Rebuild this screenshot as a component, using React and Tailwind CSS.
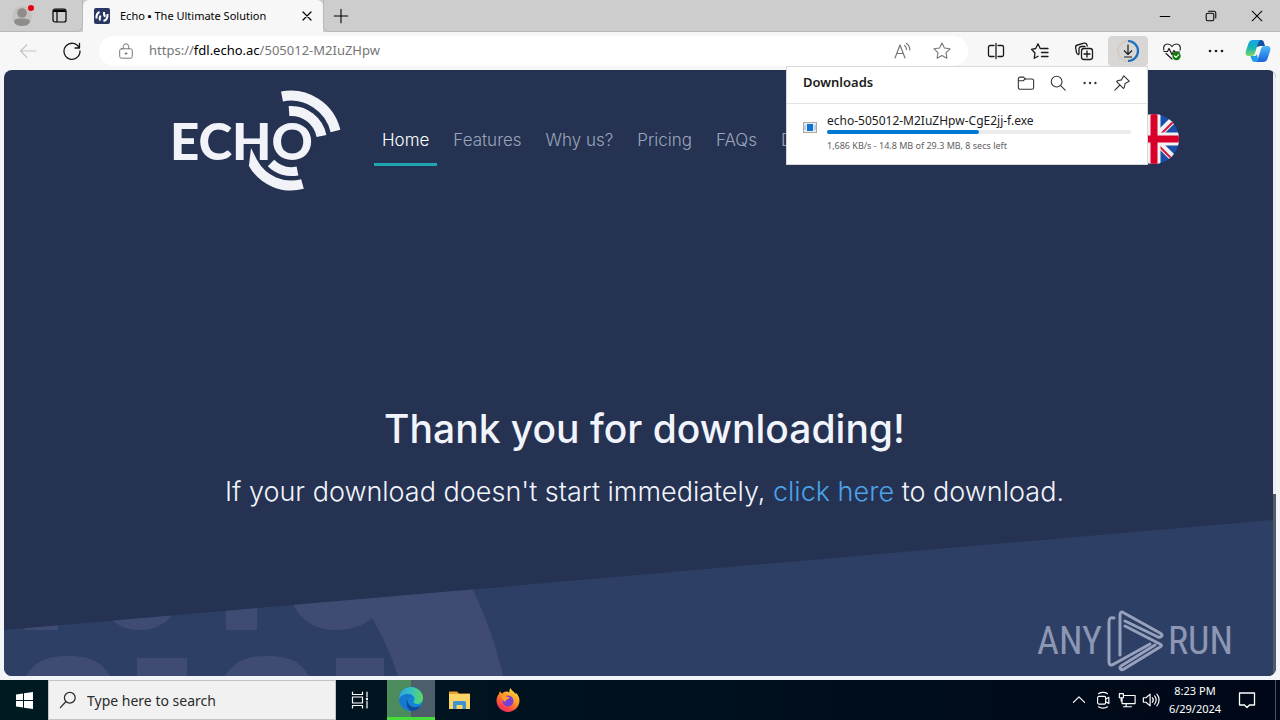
import clsx from 'clsx'

const NAV = ['Home', 'Features', 'Why us?', 'Pricing', 'FAQs', 'Docs']

// Thin line icon on a 20px grid
function Icon({ children, size = 20, stroke = 1.1, className }) {
  return (
    <svg
      width={size}
      height={size}
      viewBox="0 0 20 20"
      fill="none"
      stroke="currentColor"
      strokeWidth={stroke}
      strokeLinecap="round"
      strokeLinejoin="round"
      className={clsx('shrink-0', className)}
      aria-hidden="true"
    >
      {children}
    </svg>
  )
}

function ToolButton({ label, className, children }) {
  return (
    <button
      type="button"
      aria-label={label}
      className={clsx('flex h-[30px] w-10 shrink-0 items-center justify-center rounded-sm', className)}
    >
      {children}
    </button>
  )
}

function Dots({ size = 20 }) {
  return (
    <Icon size={size}>
      <g fill="currentColor" stroke="none">
        <circle cx="4" cy="10" r="1.3" />
        <circle cx="10" cy="10" r="1.3" />
        <circle cx="16" cy="10" r="1.3" />
      </g>
    </Icon>
  )
}

function EchoFavicon() {
  return (
    <svg width="16" height="16" viewBox="0 0 16 16" className="shrink-0" aria-hidden="true">
      <rect width="16" height="16" rx="2" fill="#2b3763" />
      <g fill="none" stroke="#fff" strokeWidth="2">
        <path d="M2.500 10.500c-.3-3 .8-5.500 3-6.500M6 12.500c-.8-2-.3-3.500.5-5" />
        <path d="M9.500 13c2.500-.8 4.300-3.500 4-7M10 4c-.3 2.500.3 4 1.500 4.500" />
      </g>
    </svg>
  )
}

function TitleBar() {
  return (
    <div className="flex h-8 bg-[#cdcdcd]">
      <div className="flex w-[83px] items-center gap-[18px] rounded-br-md border-r border-b border-[#b8b8b8] pl-3">
        <button type="button" aria-label="Profile">
          <svg width="22" height="24" viewBox="0 0 22 24" aria-hidden="true">
            <circle cx="10" cy="12" r="10" fill="#c4c2c0" />
            <circle cx="10" cy="9" r="4.800" fill="#8f8c89" />
            <path d="M2 18c0-3 3-3.500 8-3.500s8 .5 8 3.500c-1.500 3-4.500 4-8 4s-6.500-1-8-4z" fill="#8f8c89" />
            <circle cx="19" cy="4" r="3" fill="#e3000b" />
          </svg>
        </button>
        <button type="button" aria-label="Tab actions">
          <svg width="15" height="15" viewBox="0 0 15 15" fill="none" stroke="#000" strokeWidth="1.200" aria-hidden="true">
            <rect x="1" y="1" width="13" height="13" rx="2" />
            <path d="M1 3.500h13M5 4v10" />
            <path d="M2 2.500h11" strokeWidth="2" />
          </svg>
        </button>
      </div>
      <div className="flex w-60 items-center rounded-t-md bg-[#f7f7f7] pr-2 pl-[11px]">
        <EchoFavicon />
        <span className="ml-2.5 flex-1 whitespace-nowrap text-[11px] text-black">Echo ▪ The Ultimate Solution</span>
        <button type="button" aria-label="Close tab" className="text-black">
          <Icon size={16} stroke={1.5}>
            <path d="M5 5l10 10M15 5L5 15" />
          </Icon>
        </button>
      </div>
      <div className="flex flex-1 items-center rounded-bl-md border-b border-l border-[#b8b8b8] pl-2 text-black">
        <button type="button" aria-label="New tab">
          <Icon size={18} stroke={1.2}>
            <path d="M10 2.500v15M2.500 10h15" />
          </Icon>
        </button>
        <div className="ml-auto flex">
          <button type="button" aria-label="Minimize" className="flex w-[46px] justify-center">
            <Icon size={16} stroke={1.3}>
              <path d="M4 10.500h12" />
            </Icon>
          </button>
          <button type="button" aria-label="Restore" className="flex w-[46px] justify-center">
            <Icon size={16} stroke={1.3}>
              <rect x="4" y="6.500" width="9.500" height="9.500" rx="2" />
              <path d="M7 4h6.500a2.500 2.500 0 0 1 2.500 2.500v6" />
            </Icon>
          </button>
          <button type="button" aria-label="Close" className="flex w-[46px] justify-center">
            <Icon size={16} stroke={1.3}>
              <path d="M4 4l12 12M16 4L4 16" />
            </Icon>
          </button>
        </div>
      </div>
    </div>
  )
}

function CopilotLogo() {
  return (
    <svg width="26" height="24" viewBox="0 0 26 24" aria-hidden="true">
      <defs>
        <linearGradient id="cp1" x1="0" y1="0" x2="0" y2="1">
          <stop offset="0" stopColor="#17a5e8" />
          <stop offset="0.500" stopColor="#17b4b4" />
          <stop offset="1" stopColor="#7fd95f" />
        </linearGradient>
        <linearGradient id="cp2" x1="0" y1="0" x2="0" y2="1">
          <stop offset="0" stopColor="#4fb8f5" />
          <stop offset="0.600" stopColor="#2a84ea" />
          <stop offset="1" stopColor="#1f62dc" />
        </linearGradient>
      </defs>
      <path d="M12 1h4c2 0 2.500 1 3 2.500L20 7h-5l-3 1z" fill="#1450a0" />
      <path d="M8 1h8c-1.500 0-2.300 1.200-3 3.500L10 14c-.7 2-1.500 3-4 3H4c-3 0-4-2-3.200-4.500l2.600-8C4.300 2 5.500 1 8 1z" fill="url(#cp1)" />
      <path d="M18 23h-8c1.500 0 2.300-1.200 3-3.500L16 10c.7-2 1.500-3 4-3h2c3 0 4 2 3.200 4.500l-2.600 8C21.700 22 20.500 23 18 23z" fill="url(#cp2)" />
      <path d="M5.500 17H9c1.500 0 2.500-.5 3-2l1 5c-.6 2-1.500 3-3 3-2 0-3-1-3.500-3z" fill="#1fa0e8" />
    </svg>
  )
}

function DownloadsPopup() {
  return (
    <section
      aria-label="Downloads"
      className="absolute top-full right-0 z-20 w-[362px] border border-[#d8d8d8] bg-white pb-2.5 text-[#1b1b1b]"
    >
      <div className="flex h-[37px] items-center border-b border-[#e2e2e2] pr-4 pb-1 pl-4">
        <h2 className="flex-1 text-[13px] font-semibold">Downloads</h2>
        <div className="flex gap-3.5 text-[#333]">
          <button type="button" aria-label="Open downloads folder">
            <Icon size={18} stroke={1.2}>
              <path d="M1.500 5.500a2 2 0 0 1 2-2h3.800l2 2h7.200a2 2 0 0 1 2 2v7.500a2 2 0 0 1-2 2h-13a2 2 0 0 1-2-2z" />
              <path d="M1.500 7.500h5.300l2.500-2" />
            </Icon>
          </button>
          <button type="button" aria-label="Search downloads">
            <Icon size={18} stroke={1.2}>
              <circle cx="8.500" cy="8.500" r="6" />
              <path d="M13 13l5 5" />
            </Icon>
          </button>
          <button type="button" aria-label="More options">
            <Dots size={18} />
          </button>
          <button type="button" aria-label="Pin downloads">
            <Icon size={18} stroke={1.2}>
              <path d="M12 2l6 6-1.500 1-3 1.500-1 4.500-1 1-7.500-7.500 1-1L9.500 6.500 11 3.500zM7.500 12.500L2 18" />
            </Icon>
          </button>
        </div>
      </div>
      <div className="flex items-start gap-2.5 px-4 pt-2">
        <svg width="14" height="11" viewBox="0 0 14 11" className="mt-2.5 shrink-0" aria-hidden="true">
          <rect x="0.500" y="0.500" width="13" height="10" fill="#e4eef5" stroke="#b5a79c" />
          <rect x="4" y="2" width="6" height="7" fill="#1173cf" />
          <path d="M2 3v5M12 3v5" stroke="#8cb8dc" />
        </svg>
        <div className="flex-1">
          <p className="text-[12px] leading-[17px]">echo-505012-M2IuZHpw-CgE2jj-f.exe</p>
          <div className="mt-px h-1 rounded-full bg-[#ebebeb]">
            <div className="h-1 rounded-full bg-[#0078d4]" style={{ width: '50%' }} />
          </div>
          <p className="mt-1 text-[9px] leading-4 text-[#616161]">1,686 KB/s - 14.8 MB of 29.3 MB, 8 secs left</p>
        </div>
      </div>
    </section>
  )
}

function Toolbar() {
  return (
    <div className="flex h-[38px] items-center bg-[#f7f7f7] pr-1 pl-2 text-[#1a1a1a]">
      <ToolButton label="Back" className="text-[#c4c4c4]">
        <Icon>
          <path d="M18 10H2.500M9 3.500L2.500 10 9 16.500" />
        </Icon>
      </ToolButton>
      <ToolButton label="Refresh" className="ml-1">
        <Icon stroke={1.3}>
          <path d="M17.300 7A8 8 0 1 0 18 10M17.500 2.500V7H13" />
        </Icon>
      </ToolButton>
      <div className="ml-[7px] flex h-[30px] flex-1 items-center rounded-full bg-white pr-4 pl-[18px] text-[#767676]">
        <Icon size={18}>
          <rect x="3" y="7.500" width="14" height="10.500" rx="2" />
          <path d="M7 7.500V5a3 3 0 0 1 6 0v2.500" />
          <circle cx="10" cy="12.800" r="0.900" fill="currentColor" />
        </Icon>
        <div className="ml-3.5 flex-1 whitespace-nowrap text-[13px]">
          https://<span className="text-black">fdl.echo.ac</span>/505012-M2IuZHpw
        </div>
        <div className="flex gap-5">
          <button type="button" aria-label="Read aloud">
            <Icon stroke={1.2}>
              <path d="M3 17L8 4l5 13M4.800 12.500h6.500M12.500 4.500c1.500 1 2 2.200 2 4M14.500 2.500c2.300 1.500 3.300 3.500 3.300 6.500" />
            </Icon>
          </button>
          <button type="button" aria-label="Add to favorites">
            <Icon>
              <path d="M10 2l2.400 5 5.600.8-4 3.900.9 5.500-4.900-2.600-4.900 2.600.9-5.500-4-3.900 5.600-.8z" />
            </Icon>
          </button>
        </div>
      </div>
      <div className="ml-2 flex gap-1">
        <ToolButton label="Split screen">
          <Icon stroke={1.3}>
            <path d="M8 4.500H4a1.500 1.500 0 0 0-1.500 1.500v8A1.500 1.500 0 0 0 4 15.500H8M12 4.500h4a1.500 1.500 0 0 1 1.500 1.500v8a1.500 1.500 0 0 1-1.500 1.500H12M10 2.500v15" />
          </Icon>
        </ToolButton>
        <ToolButton label="Favorites">
          <Icon stroke={1.3}>
            <path d="M11 7.500h-.8L8 2.800 5.700 7.500l-4.200.8L5 12l-.8 5.300L8 15.200M12 7.500h6M11.500 11.500H18M11.500 15.500H18" />
          </Icon>
        </ToolButton>
        <ToolButton label="Collections">
          <Icon stroke={1.3}>
            <path d="M4.500 13.500a2.500 2.500 0 0 1-2-1.800L1.700 7a2.500 2.500 0 0 1 1.800-3l6.500-1.800a2.500 2.500 0 0 1 3 1.800l.3 1M5 13V8a2.500 2.500 0 0 1 2.500-2.500H11" />
            <rect x="7.500" y="7.500" width="11" height="11" rx="2.500" />
            <path d="M13 10v6M10 13h6" />
          </Icon>
        </ToolButton>
        <div className="relative">
          <ToolButton label="Downloads" className="bg-[#d9d7d5]">
            <svg width="24" height="24" viewBox="0 0 24 24" fill="none" aria-hidden="true">
              <circle cx="12" cy="12" r="10" stroke="#d3cbc4" strokeWidth="2" />
              <path d="M12 2a10 10 0 0 1 0 20" stroke="#1b6fc0" strokeWidth="2.200" />
              <path d="M12 5.500v10M8 11.500l4 4 4-4M8 18h8" stroke="#1a1a1a" strokeWidth="1.200" />
            </svg>
          </ToolButton>
          <DownloadsPopup />
        </div>
        <ToolButton label="Browser essentials">
          <Icon stroke={1.2}>
            <path d="M1.800 9C.8 5.500 3 3 5.500 3 7.500 3 9 4 10 5.500 11 4 12.500 3 14.500 3c2.500 0 4.700 2.500 3.700 6M2 10.500h3.500L7 7.500l3 6 2-4 1 1.500h4.500M4 12.500l6 5.500" />
            <circle cx="14.500" cy="15" r="4.200" fill="#0f7b0f" stroke="none" />
            <path d="M12.600 15l1.400 1.400 2.500-2.600" stroke="#fff" />
          </Icon>
        </ToolButton>
        <ToolButton label="Settings and more">
          <Dots />
        </ToolButton>
        <button type="button" aria-label="Copilot" className="flex w-9 items-center justify-center">
          <CopilotLogo />
        </button>
      </div>
    </div>
  )
}

function EchoLogo() {
  return (
    <svg width="172" height="104" viewBox="171 88 172 104" role="img" aria-label="Echo" className="shrink-0 overflow-visible">
      <g fill="none" stroke="#f1f3f8">
        <path d="M282 96.500A46 46 0 0 1 335.500 131" strokeWidth="10" />
        <path d="M289 111A31 31 0 0 1 321.500 136" strokeWidth="10" />
        <path d="M253 163A43.500 43.500 0 0 0 302.500 184" strokeWidth="10" />
        <path d="M271 163A29 29 0 0 0 297.500 171" strokeWidth="9" />
      </g>
      <path d="M251 148l7 14-3 5-6-2z" fill="#f1f3f8" />
      <circle cx="293" cy="142" r="20" fill="#253252" />
      <text x="170" y="160" fontSize="51" fontWeight="900" fill="#f1f3f8" className="font-[Lato,sans-serif]">
        ECHO
      </text>
    </svg>
  )
}

function UkFlag() {
  return (
    <svg width="50" height="50" viewBox="0 0 50 50" className="shrink-0" role="img" aria-label="English">
      <defs>
        <clipPath id="flag">
          <circle cx="25" cy="25" r="25" />
        </clipPath>
      </defs>
      <g clipPath="url(#flag)">
        <rect width="50" height="50" fill="#1a4fa8" />
        <path d="M0 0l50 50M50 0L0 50" stroke="#f2f2f2" strokeWidth="7" />
        <path d="M0 2l50 50M50 2L0 52" stroke="#d8173a" strokeWidth="2" />
        <path d="M25 0v50M0 25h50" stroke="#f2f2f2" strokeWidth="13" />
        <path d="M25 0v50M0 25h50" stroke="#d8002b" strokeWidth="7" />
      </g>
    </svg>
  )
}

// Slanted band with the faded oversized logo behind the hero
function SlantBackground() {
  return (
    <svg
      viewBox="4 520 1269 156"
      preserveAspectRatio="none"
      className="absolute bottom-0 left-0 h-[156px] w-full"
      aria-hidden="true"
    >
      <defs>
        <clipPath id="slant">
          <path d="M4 630L1273 520V676H4z" />
        </clipPath>
      </defs>
      <g clipPath="url(#slant)">
        <rect x="4" y="520" width="1269" height="156" fill="#2e3f66" />
        <g fill="#404b74">
          <path d="M25 620h33v10H25zM226 600h31v30h-31z" />
          <path d="M105 612C115 626 127 630 140 630S165 626 176 610z" />
          <path d="M290 598C299 620 315 630 335 630c15 0 29-4 37-12 10 17 19 36 26 58h105c-7-32-17-59-32-90z" />
          <path d="M26 676c9-14 20-20 42-20s34 6 42 20zM137 658h50v18h-50zM225 676c9-14 20-20 42-20s34 6 42 20zM336 658h48v18h-48z" />
        </g>
      </g>
    </svg>
  )
}

function Watermark() {
  return (
    <div className="absolute right-10 bottom-1 flex items-center gap-1 font-['Liberation_Sans_Narrow','Roboto_Condensed','Liberation_Sans',sans-serif] text-[38px] leading-[62px] text-[#8d97b3]">
      <span>ANY</span>
      <svg width="58" height="62" viewBox="0 0 58 62" fill="none" stroke="#98a1bc" strokeWidth="3" strokeLinejoin="round" strokeLinecap="round" aria-hidden="true">
        <path d="M8 8c-3-1-5 0-5 4v40c0 3 2 4 5 2l36-20" />
        <path d="M14 45V5c0-3 2-4 4-2l36 20c4 2 1 5-2 4L19 11" />
        <path d="M19 16l35 18c2 1 2 2 0 3L18 59c-3 2-5-1-3-3l34-21" />
      </svg>
      <span>RUN</span>
    </div>
  )
}

function EchoPage() {
  return (
    <div className="flex flex-1 bg-[#f3f4f8] px-1 pb-1">
      <div className="relative flex flex-1 overflow-hidden rounded-lg bg-[#253252] font-[Inter,sans-serif]">
        <main className="relative flex flex-1 flex-col">
          <SlantBackground />
          <header className="relative flex items-start pt-[18px] pr-[94px] pl-[167px]">
            <EchoLogo />
            <nav className="ml-[31px] flex gap-2 pt-[38px]">
              {NAV.map((item, i) => (
                <a
                  key={item}
                  href="#"
                  className={clsx(
                    'border-b-[3px] px-2 pt-1 pb-3 text-[17px] leading-[21px] font-light whitespace-nowrap',
                    i === 0 ? 'border-[#1fa5b0] text-white' : 'border-transparent text-[#9aa5bb]'
                  )}
                >
                  {item}
                </a>
              ))}
            </nav>
            <a href="#" aria-label="Language" className="mt-[26px] ml-auto">
              <UkFlag />
            </a>
          </header>
          <div className="relative mt-[212px] flex flex-col items-center pl-3 text-center text-[#f2f4fb]">
            <h1 className="text-[39px] leading-[50px] font-medium">Thank you for downloading!</h1>
            <p className="mt-5 text-[27px] leading-9 font-light">
              If your download doesn't start immediately,{' '}
              <a href="#" className="text-[#4ba3e8]">
                click here
              </a>{' '}
              to download.
            </p>
          </div>
          <Watermark />
        </main>
        <div className="flex w-[3px] flex-col">
          <div className="flex-[7] bg-[#eceef2]" />
          <div className="flex-[3] bg-[#505a68]" />
        </div>
      </div>
    </div>
  )
}

function EdgeLogo() {
  return (
    <svg width="26" height="26" viewBox="0 0 26 26" aria-hidden="true">
      <defs>
        <linearGradient id="edgeTop" x1="0" y1="0.500" x2="1" y2="0.500">
          <stop offset="0" stopColor="#2ea6dd" />
          <stop offset="0.500" stopColor="#35c1c5" />
          <stop offset="1" stopColor="#5fd85c" />
        </linearGradient>
      </defs>
      <circle cx="13" cy="13" r="12" fill="#1385d4" />
      <path d="M1 13C1 6 6.500 1 13 1s12 5 12 11c0 4-3 6-6 6-2.500 0-4-1-3.500-2.500 1-1 1.200-2 .8-3.500C15.500 9 12 7.500 8.500 8 5 8.500 2 10.500 1 13z" fill="url(#edgeTop)" />
      <path d="M9.500 13c-2 4 0 10 6 11.800C9 26.500 2 21 1 14.500 2 10.500 5 8.500 8.500 8c3-.3 6.500 1 7.500 4-2.500-2-5.500-1-6.500 1z" fill="#1579cf" />
      <path d="M9.800 13c-1.200 5 3 8.500 8 8 2 0 4-.8 5.200-1.800C21 23 17.500 25 14 24.900 9 24 7 17 9.800 13z" fill="#114a9c" />
    </svg>
  )
}

function FolderLogo() {
  return (
    <svg width="22" height="20" viewBox="0 0 22 20" aria-hidden="true">
      <path d="M0 1.500h8l2 2h11v5H0z" fill="#e8a22f" />
      <rect x="0" y="4" width="21" height="15" fill="#fbd567" />
      <path d="M4 19v-6.500a1.500 1.500 0 0 1 1.500-1.500h10a1.500 1.500 0 0 1 1.500 1.500V19h-3.500v-4h-6v4z" fill="#3f93cf" />
    </svg>
  )
}

function FirefoxLogo() {
  return (
    <svg width="24" height="24" viewBox="0 0 24 24" aria-hidden="true">
      <defs>
        <linearGradient id="fox" x1="0.800" y1="0" x2="0.200" y2="1">
          <stop offset="0" stopColor="#ffe14a" />
          <stop offset="0.450" stopColor="#ff9224" />
          <stop offset="0.750" stopColor="#ff4a3f" />
          <stop offset="1" stopColor="#e8207e" />
        </linearGradient>
      </defs>
      <path d="M3 6c0-1 .3-2 1-2.800C4.500 4.500 5.500 5.200 6.500 5.400 7.500 4 9 3.300 10.500 3.500c1 0 2 .5 3 1C13 3 13.500 1.500 14.500 0c1 2.500 3.500 3.500 5 6 .3-.5.300-1 .2-1.500 2.300 2 3.800 5 3.800 8C23.500 19 18 24 12 24S.5 19 .5 12.500C.5 10 1.500 7.500 3 6z" fill="url(#fox)" />
      <circle cx="12" cy="13" r="5.500" fill="#7b3fd6" />
      <path d="M6 9c2-1.500 4-1 5.500 0 1.500 0 2 .3 2 1-1 1.500-3.500 1-4 3.500-1.500.5-3-1-3.500-4.500z" fill="#ff9f2b" />
    </svg>
  )
}

function TrayButton({ label, children }) {
  return (
    <button type="button" aria-label={label} className="flex w-6 items-center justify-center">
      {children}
    </button>
  )
}

function Taskbar() {
  return (
    <footer className="flex h-10 bg-linear-to-r from-[#001a22] to-[#000818] text-white">
      <button type="button" aria-label="Start" className="flex w-12 items-center justify-center">
        <svg width="17" height="17" viewBox="0 0 17 17" fill="#fff" aria-hidden="true">
          <path d="M0 2.500l7-1V8H0zM8 1.300L17 0v8H8zM0 9h7v6.500l-7-1zM8 9h9v8l-9-1.300z" />
        </svg>
      </button>
      <label className="flex w-72 items-center gap-2.5 border border-[#c4c4c4] bg-[#f1f1f1] pl-2.5 text-[#2b2b2b]">
        <Icon size={18} stroke={1.4}>
          <circle cx="12" cy="7.500" r="6" />
          <path d="M7.500 12L1.500 18.500" />
        </Icon>
        <input
          type="text"
          aria-label="Search"
          placeholder="Type here to search"
          className="min-w-0 flex-1 text-[14px] outline-none placeholder:text-[#2b2b2b]"
        />
      </label>
      <button type="button" aria-label="Task view" className="flex w-12 items-center justify-center">
        <Icon size={20} stroke={1.2}>
          <path d="M2.500 2v2.500h10V2M2.500 18v-2.500h10V18M2.500 7h10v6h-10zM17 2v5M17 11v7" />
          <rect x="16" y="8" width="2" height="2" fill="currentColor" stroke="none" />
        </Icon>
      </button>
      <button
        type="button"
        aria-label="Microsoft Edge"
        className="ml-[3px] flex w-12 items-center justify-center border-b-[3px] border-[#46dc3c] bg-linear-to-r from-[#4b8b5c] from-50% to-[#4c5e6a] to-50%"
      >
        <EdgeLogo />
      </button>
      <button type="button" aria-label="File Explorer" className="flex w-[49px] items-center justify-center">
        <FolderLogo />
      </button>
      <button type="button" aria-label="Firefox" className="flex w-12 items-center justify-center">
        <FirefoxLogo />
      </button>
      <div className="ml-auto flex">
        <TrayButton label="Show hidden icons">
          <Icon size={16} stroke={1.5}>
            <path d="M3 13l7-7 7 7" />
          </Icon>
        </TrayButton>
        <TrayButton label="Meet now">
          <Icon size={18} stroke={1.3}>
            <rect x="4" y="6" width="9" height="8.500" rx="1.500" />
            <path d="M13 9l3.500-2v7L13 12M5 3c2.500-2 7.500-2 10 0M5 17.500c2.500 2 7.500 2 10 0" />
          </Icon>
        </TrayButton>
        <TrayButton label="Network">
          <Icon size={18} stroke={1.3}>
            <path d="M7 5h12v9H4.500V8.500M9 14v3.500M6 17.500h9M1.500 3h4.500v4.500H1.500zM3.500 8v3" />
          </Icon>
        </TrayButton>
        <TrayButton label="Volume">
          <Icon size={18} stroke={1.3}>
            <path d="M1.500 7.500h3L9 3.500v13l-4.500-4h-3zM11.500 7.500c1.300 1.500 1.300 3.500 0 5M14 5.500c2.300 2.500 2.300 6.500 0 9M16.500 3.500c3.300 3.500 3.300 9.500 0 13" />
          </Icon>
        </TrayButton>
        <div className="flex w-16 flex-col justify-center text-center text-[11px] leading-[18px] whitespace-nowrap">
          <time>8:23 PM</time>
          <time>6/29/2024</time>
        </div>
        <button type="button" aria-label="Notifications" className="flex w-10 items-center justify-center">
          <Icon size={20} stroke={1.3}>
            <path d="M2.500 3h15v12h-5L10 17.500 7.500 15h-5z" />
          </Icon>
        </button>
        <div className="mr-1 ml-2 w-px bg-[#4a5260]" />
      </div>
    </footer>
  )
}

export default function App() {
  return (
    <div className="flex min-h-screen flex-col bg-[#f3f4f8] font-['Noto_Sans','Open_Sans',sans-serif]">
      <TitleBar />
      <Toolbar />
      <EchoPage />
      <Taskbar />
    </div>
  )
}
